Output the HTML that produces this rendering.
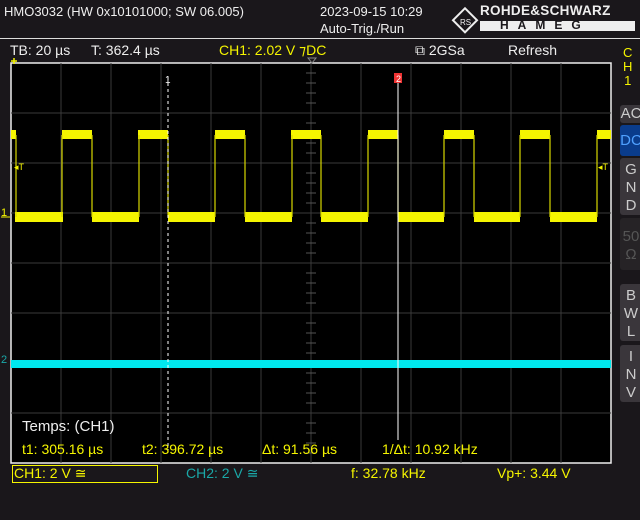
<!DOCTYPE html><html><head><style>
body{margin:0;width:640px;height:520px;background:#1a171b;overflow:hidden;position:relative;font-family:"Liberation Sans","DejaVu Sans",sans-serif;}
.t{position:absolute;font-size:14px;white-space:nowrap;color:#eee;}
.y{color:#f5f500}.c{color:#1aa8a8}
.b{position:absolute;left:620px;width:22px;background:#3a363b;border-radius:3px 0 0 3px;color:#ccc;font-size:15px;text-align:center;line-height:18px;}
</style></head><body>
<div class="t" style="left:4px;top:4px;font-size:13px">HMO3032 (HW 0x10101000; SW 06.005)</div>
<div class="t" style="left:320px;top:4px;font-size:13px">2023-09-15 10:29</div>
<div class="t" style="left:320px;top:21px;font-size:13px">Auto-Trig./Run</div>
<svg style="position:absolute;left:450px;top:6px" width="30" height="30"><rect x="6" y="6" width="17" height="17" transform="rotate(45 15 15)" fill="none" stroke="#eee" stroke-width="2"/><text x="10" y="19" font-size="8" fill="#eee" font-family="Liberation Sans">RS</text></svg>
<div class="t" style="left:480px;top:3px;font-weight:bold;font-size:13.5px;letter-spacing:0.3px">ROHDE&amp;SCHWARZ</div>
<div style="position:absolute;left:480px;top:21px;width:155px;height:10px;background:#eee"></div>
<div class="t" style="left:500px;top:18px;font-weight:bold;font-size:12px;color:#1a171b;letter-spacing:9px">HAMEG</div>
<div style="position:absolute;left:0;top:38px;width:640px;height:1px;background:#ddd"></div>
<div class="t" style="left:10px;top:42px">TB: 20 µs</div>
<div class="t" style="left:91px;top:42px">T: 362.4 µs</div>
<div class="t y" style="left:219px;top:42px">CH1: 2.02 V ⁊DC</div>
<div class="t" style="left:415px;top:42px">⧉ 2GSa</div>
<div class="t" style="left:508px;top:42px">Refresh</div>
<div class="t y" style="left:623px;top:46px;font-size:13px;line-height:14px;text-align:center">C<br>H<br>1</div>
<svg style="position:absolute;left:0;top:55px" width="620" height="420">
<rect x="11" y="8" width="600" height="400" fill="#000" stroke="#eee" stroke-width="1.5"/>
<g stroke="#3a3a3a" stroke-width="1">
<path d="M61 8V408M111 8V408M161 8V408M211 8V408M261 8V408M361 8V408M411 8V408M461 8V408M511 8V408M561 8V408M311 8V408"/>
<path d="M11 58H611M11 108H611M11 158H611M11 208H611M11 258H611M11 308H611M11 358H611"/>
</g>
<g stroke="#555"><path d="M306 18h10M306 28h10M306 38h10M306 48h10M306 68h10M306 78h10M306 88h10M306 98h10M306 118h10M306 128h10M306 138h10M306 148h10M306 168h10M306 178h10M306 188h10M306 198h10M306 218h10M306 228h10M306 238h10M306 248h10M306 268h10M306 278h10M306 288h10M306 298h10M306 318h10M306 328h10M306 338h10M306 348h10M306 368h10M306 378h10M306 388h10M306 398h10"/></g>
<path d="M308 3l4 5 4-5z" fill="none" stroke="#888"/>
<path d="M14 3v6M11 6h6" stroke="#f5f500" stroke-width="1.5"/>
<g fill="#f5f500">
<rect x="11" y="75" width="5" height="9"/><rect x="15" y="157" width="48" height="10"/><rect x="62" y="75" width="30" height="9"/>
<rect x="92" y="157" width="47" height="10"/><rect x="138" y="75" width="30" height="9"/><rect x="168" y="157" width="47" height="10"/>
<rect x="215" y="75" width="30" height="9"/><rect x="245" y="157" width="47" height="10"/><rect x="291" y="75" width="30" height="9"/>
<rect x="321" y="157" width="47" height="10"/><rect x="368" y="75" width="30" height="9"/><rect x="398" y="157" width="46" height="10"/>
<rect x="444" y="75" width="30" height="9"/><rect x="474" y="157" width="46" height="10"/><rect x="520" y="75" width="30" height="9"/>
<rect x="550" y="157" width="47" height="10"/><rect x="597" y="75" width="14" height="9"/>
</g>
<g stroke="#d8d800" stroke-width="1.2"><path d="M16 80v82M62 80v82M92 80v82M139 80v82M168 80v82M215 80v82M245 80v82M292 80v82M321 80v82M368 80v82M398 80v82M444 80v82M474 80v82M520 80v82M550 80v82M597 80v82"/></g>
<rect x="11" y="305" width="600" height="8" fill="#00e8ee"/>
<path d="M168 22V398" stroke="#fff" stroke-dasharray="3,3"/>
<path d="M398 22V385" stroke="#fff"/>
<rect x="394" y="18" width="8" height="10" fill="#e33"/>
<text x="396" y="27" font-size="9" fill="#fff" font-family="Liberation Sans">2</text>
<text x="165" y="28" font-size="10" fill="#fff" font-family="Liberation Sans">1</text>
<text x="14" y="115" font-size="9" fill="#f5f500" font-family="Liberation Sans">◂T</text>
<text x="598" y="115" font-size="9" fill="#f5f500" font-family="Liberation Sans">◂T</text>
<text x="1" y="161" font-size="11" fill="#f5f500" font-family="Liberation Sans">1</text>
<path d="M1 162h9" stroke="#f5f500"/>
<text x="1" y="308" font-size="11" fill="#1aa8a8" font-family="Liberation Sans">2</text>
</svg>
<div class="t" style="left:22px;top:418px;font-size:15px">Temps: (CH1)</div>
<div class="t y" style="left:22px;top:441px">t1: 305.16 µs</div>
<div class="t y" style="left:142px;top:441px">t2: 396.72 µs</div>
<div class="t y" style="left:262px;top:441px">Δt: 91.56 µs</div>
<div class="t y" style="left:382px;top:441px">1/Δt: 10.92 kHz</div>
<div style="position:absolute;left:12px;top:465px;width:144px;height:16px;border:1px solid #f5f500"></div>
<div class="t y" style="left:14px;top:465px">CH1: 2 V ≅</div>
<div class="t c" style="left:186px;top:465px">CH2: 2 V ≅</div>
<div class="t y" style="left:351px;top:465px">f: 32.78 kHz</div>
<div class="t y" style="left:497px;top:465px">Vp+: 3.44 V</div>
<div class="b" style="top:105px;height:18px">AC</div>
<div class="b" style="top:125px;height:31px;background:#0a3c8c;color:#4fa0ff;line-height:31px">DC</div>
<div class="b" style="top:158px;height:57px;padding-top:3px;box-sizing:border-box">G<br>N<br>D</div>
<div class="b" style="top:218px;height:52px;background:#262326;color:#555;padding-top:10px;box-sizing:border-box">50<br>Ω</div>
<div class="b" style="top:284px;height:57px;padding-top:3px;box-sizing:border-box">B<br>W<br>L</div>
<div class="b" style="top:345px;height:57px;padding-top:3px;box-sizing:border-box">I<br>N<br>V</div>
</body></html>
